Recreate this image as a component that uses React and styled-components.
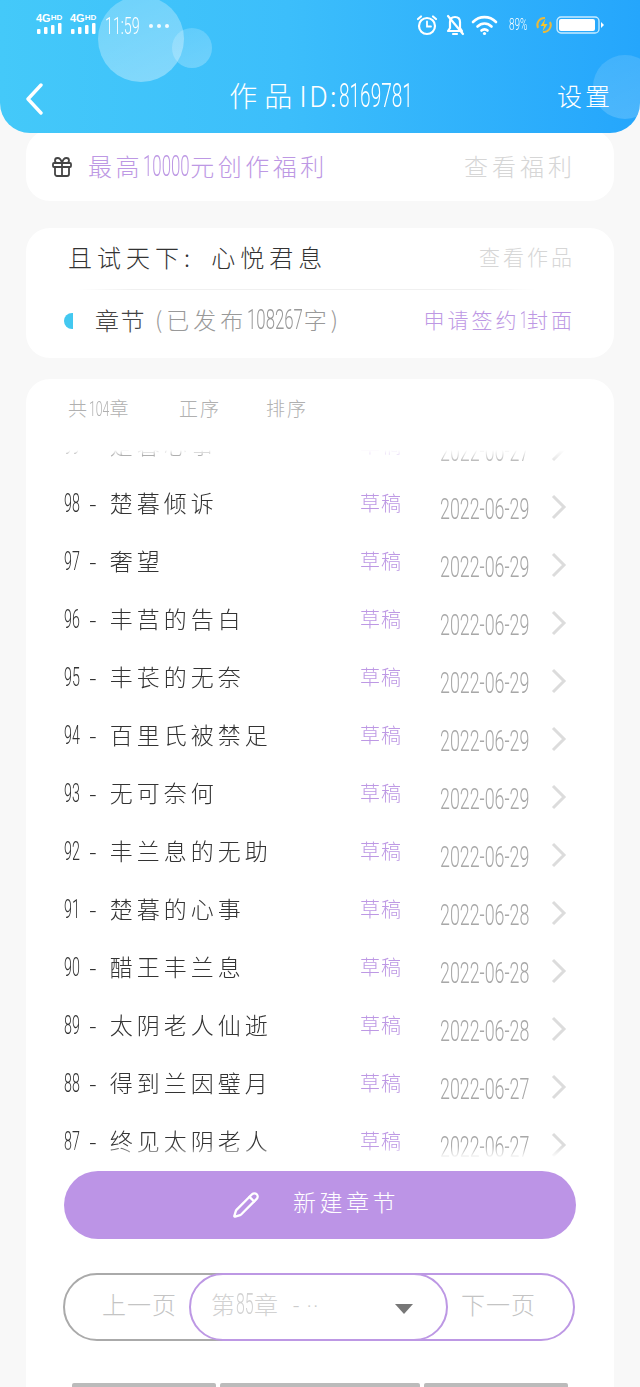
import React from "react";
import styled, { createGlobalStyle } from "styled-components";
import { Gift, Pencil } from "lucide-react";

const Global = createGlobalStyle`
  html, body { margin: 0; padding: 0; background: #f8f8f8; }
  * { box-sizing: border-box; }
  body { font-family: "Noto Sans CJK SC", "Noto Sans", sans-serif; font-weight: 300; }
`;

const Page = styled.div`
  width: 640px; height: 1387px; overflow: hidden; display: flex; flex-direction: column; background: #f8f8f8;
`;
const Header = styled.header`
  position: relative; z-index: 2; height: 133px; flex: none; overflow: hidden;
  border-radius: 0 0 30px 30px; color: #fff;
  background: linear-gradient(90deg, #44c9f9 0%, #3cbefb 45%, #25a6fc 100%);
`;
const Bubble = styled.span`
  position: absolute; border-radius: 50%;
  left: ${p => p.$x - p.$r}px; top: ${p => p.$y - p.$r}px;
  width: ${p => p.$r * 2}px; height: ${p => p.$r * 2}px;
  background: linear-gradient(160deg, rgba(255,255,255,${p => p.$a}) 0%, rgba(255,255,255,${p => p.$a * 1.5}) 100%);
`;
const StatusBar = styled.div`
  position: relative; height: 50px; display: flex; justify-content: space-between; align-items: flex-start; padding: 13px 36px 0 36px;
`;
const StatusLeft = styled.div`display: flex; align-items: flex-start; gap: 7px;`;
const StatusRight = styled.div`display: flex; align-items: center; margin-top: 1px;`;
const StatusItem = styled.div`display: flex; align-items: center; margin-left: ${p => p.$ml}px;`;
const Signal = styled.div`display: flex; flex-direction: column; width: 27px;`;
const SigText = styled.span`
  font: 700 11px/10px "Liberation Sans", sans-serif; white-space: nowrap;
  sup { font-size: 8px; line-height: 7px; vertical-align: 2px; }
`;
const NumBox = styled.span`
  display: inline-block; font-family: Roboto, "Liberation Sans", sans-serif; font-weight: 300; letter-spacing: 0;
  font-size: ${p => p.$s}px; line-height: 1; white-space: nowrap; transform-origin: 0 50%;
  width: ${p => p.$w}px; transform: scaleX(${p => p.$sx});
`;
const emOf = (c) => (/[0-9]/.test(c) ? 0.562 : c === "-" ? 0.28 : c === ":" ? 0.24 : c === "%" ? 0.73 : 0.56);
const Num = ({ s, sx, children }) => {
  const text = String(children);
  const em = [...text].reduce((a, c) => a + emOf(c), 0);
  return <NumBox $s={s} $sx={sx} $w={Math.round(em * s * sx * 10) / 10}>{text}</NumBox>;
};
const ClockSlot = styled.div`margin: 2px 0 0 1px; line-height: 22px;`;
const Dots = styled.div`display: flex; gap: 4px; margin: 11px 0 0 1px;`;
const Dot = styled.i`width: 4px; height: 4px; border-radius: 50%; background: #fff; opacity: .9;`;
const Nav = styled.nav`
  position: relative; height: 83px; display: grid; grid-template-columns: 96px 1fr 100px; align-items: start; padding: 0 27px 0 25px;
`;
const NavTitle = styled.div`
  font-size: 28px; line-height: 40px; margin-top: 25px; letter-spacing: 7px; white-space: nowrap; text-align: center; padding-left: 9px;
`;
const Latin = styled.span`letter-spacing: 2px;`;
const NavAction = styled.div`
  font-size: 25px; line-height: 40px; letter-spacing: 3px; text-align: right; margin-top: 25px; white-space: nowrap;
`;
const BackBtn = styled.div`margin-top: 33px; display: flex; line-height: 0;`;

const Card = styled.section`
  margin: 0 26px; background: #fff; border-radius: 24px; flex: none;
`;
const WelfareCard = styled(Card)`
  margin-top: -3px; height: 71px; display: flex; align-items: center; justify-content: space-between; padding: 0 38px 0 24px;
`;
const Row = styled.div`display: flex; align-items: center;`;
const GiftSlot = styled.div`display: flex; margin-right: 14px; margin-top: 2px;`;
const Purple = styled.span`
  color: #bd98e4; font-size: ${p => p.$s || 24}px; letter-spacing: ${p => p.$l ?? 3.5}px; white-space: nowrap;
`;
const Muted = styled.span`
  color: #d6d6d6; font-size: ${p => p.$s || 24}px; letter-spacing: ${p => p.$l ?? 4}px; white-space: nowrap;
`;
const WorkCard = styled(Card)`
  margin-top: 27px; height: 130px; padding: 0 39px 0 38px; display: flex; flex-direction: column;
`;
const WorkTop = styled.div`
  height: 61px; display: flex; align-items: center; justify-content: space-between; margin: 0 0 0 4px; padding-bottom: 5px;
`;
const WorkDivider = styled.div`
  height: 1px; flex: none; margin: 0 40px 0 14px;
  background: linear-gradient(90deg, transparent, #f0f0f0 12%, #f0f0f0 88%, transparent);
`;
const WorkName = styled.div`font-size: 24px; letter-spacing: 5px; word-spacing: 6px; color: #333; white-space: nowrap;`;
const WorkBottom = styled.div`
  flex: 1; display: flex; align-items: center; justify-content: space-between; padding-bottom: 10px;
`;
const HalfDot = styled.i`
  width: 9px; height: 16px; border-radius: 9px 0 0 9px; background: #43c8f0; margin: 3px 22px 0 0; flex: none;
`;
const ChapterTitle = styled.span`font-size: 24px; letter-spacing: 1.5px; color: #444; white-space: nowrap;`;
const ChapterNote = styled.span`font-size: 23px; letter-spacing: 4px; color: #999; white-space: nowrap; margin-left: 9px;`;

const ListCard = styled(Card)`
  margin-top: 21px; flex: 1; display: flex; flex-direction: column; border-radius: 24px 24px 0 0; padding: 0 38px;
`;
const Filter = styled.div`
  height: 71px; flex: none; display: flex; align-items: flex-start; padding: 15px 0 0 4px; color: #b0b0b0; font-size: 19px; line-height: 28px;
`;
const FilterItem = styled.span`
  width: ${p => p.$w}px; letter-spacing: 2px; white-space: nowrap;
`;
const List = styled.div`
  height: 708px; flex: none; overflow: hidden;
  margin-right: -2px;
  -webkit-mask-image: linear-gradient(180deg, transparent 0, #000 14px, #000 696px, transparent 708px);
  mask-image: linear-gradient(180deg, transparent 0, #000 14px, #000 696px, transparent 708px);
`;
const ListInner = styled.div`margin-top: -33px;`;
const ChapterRow = styled.div`
  height: 58px; display: grid; grid-template-columns: 296px 80px 1fr; align-items: center;
`;
const RowTitle = styled.div`font-size: 23px; letter-spacing: 4px; color: #333; white-space: nowrap; margin-top: -4px;`;
const Draft = styled.div`font-size: 20px; letter-spacing: 1px; color: #bd98e4; margin-top: -4px;`;
const DateCell = styled.div`
  display: flex; align-items: center; justify-content: space-between; color: #a8a8a8; padding: 10px 11px 0 0;
`;
const Chevron = styled.svg`margin-top: -4px;`;
const CreateBtn = styled.button`
  margin: 13px 0 0 0; height: 68px; width: 512px; flex: none; border: 0; border-radius: 34px; background: #bc94e6; color: #fff;
  display: flex; align-items: center; justify-content: center; gap: 33px; font: inherit; font-size: 23px; letter-spacing: 3.5px; padding: 0 9px 8px 0;
  svg { margin-top: 8px; }
`;
const Pager = styled.div`
  margin: 34px 0 0 -1px; width: 512px; height: 68px; flex: none; display: flex;
`;
const PageEdge = styled.div`
  flex: none; height: 68px; border: 2px solid ${p => p.$c}; border-radius: 34px; color: #c4c4c4; font-size: 24px; letter-spacing: 1px; background: #fff;
  display: flex; align-items: center; white-space: nowrap; padding-bottom: 7px;
`;
const PrevBtn = styled(PageEdge)`width: 196px; padding-left: 37px; margin-right: -70px;`;
const NextBtn = styled(PageEdge)`width: 195px; padding-left: 79px; margin-left: -68px;`;
const PageSelect = styled(PageEdge)`
  position: relative; z-index: 1; width: 259px; padding: 0 33px 7px 20px; justify-content: space-between; color: #d2d2d2;
`;
const Ellipsis = styled.span`margin-left: 14px; letter-spacing: 1px; color: #ccc; font-family: Roboto, sans-serif; font-size: 22px;`;
const Caret = styled.i`
  width: 0; height: 0; border: 9px solid transparent; border-top: 10px solid #777; border-bottom: 0; margin-top: 11px;
`;
const Tabs = styled.div`
  margin: 42px 0 0 8px; display: flex; gap: 4px; flex: none; width: 496px;
`;
const TabBar = styled.div`width: ${p => p.$w}px; height: 12px; background: #bbb; border-radius: 2px 2px 0 0;`;

const chapters = [
  ["99", "楚暮心事", "2022-06-27"],
  ["98", "楚暮倾诉", "2022-06-29"],
  ["97", "奢望", "2022-06-29"],
  ["96", "丰莒的告白", "2022-06-29"],
  ["95", "丰苌的无奈", "2022-06-29"],
  ["94", "百里氏被禁足", "2022-06-29"],
  ["93", "无可奈何", "2022-06-29"],
  ["92", "丰兰息的无助", "2022-06-29"],
  ["91", "楚暮的心事", "2022-06-28"],
  ["90", "醋王丰兰息", "2022-06-28"],
  ["89", "太阴老人仙逝", "2022-06-28"],
  ["88", "得到兰因璧月", "2022-06-27"],
  ["87", "终见太阴老人", "2022-06-27"],
];

const Alarm = () => (
  <svg width="24" height="22" viewBox="0 0 24 22" fill="none" stroke="#fff" strokeWidth="2.2" strokeLinecap="round">
    <circle cx="12" cy="12" r="8" />
    <path d="M12 7.5V12.5H16" strokeWidth="1.8" />
    <path d="M3 5L6 2.5M21 5L18 2.5" />
  </svg>
);
const BellOff = () => (
  <svg width="20" height="22" viewBox="0 0 20 22" fill="none" stroke="#fff" strokeWidth="2.2" strokeLinecap="round" strokeLinejoin="round">
    <path d="M5 8C5 5 7 3 10 3S15 5 15 8V14L17 17H3L5 14Z" />
    <path d="M8 20H12" />
    <path d="M3 2L18 20" />
  </svg>
);
const Wifi = () => (
  <svg width="27" height="22" viewBox="0 0 27 22" fill="none" stroke="#fff" strokeWidth="2.6" strokeLinecap="round">
    <path d="M2 8C8.5 1.5 18.5 1.5 25 8" />
    <path d="M6.5 12.5C10.5 8.5 16.5 8.5 20.5 12.5" />
    <path d="M10.5 16.5C12 15 15 15 16.5 16.5" />
    <circle cx="13.5" cy="19.5" r="1.6" fill="#fff" stroke="none" />
  </svg>
);
const Charge = () => (
  <svg width="18" height="20" viewBox="0 0 18 20" fill="none">
    <path d="M3 13A7 7 0 0 1 10 3M15 7A7 7 0 0 1 8 17" stroke="#e9b93c" strokeWidth="2" />
    <path d="M10.5 3.5L5.5 11H9L7.5 16.5L12.5 9H9Z" fill="#f5c52b" />
  </svg>
);
const Battery = () => (
  <svg width="48" height="18" viewBox="0 0 48 18" fill="none">
    <rect x="1" y="1" width="42" height="16" rx="4" stroke="#c8ecff" strokeWidth="1.3" />
    <rect x="3" y="3" width="36" height="12" rx="2" fill="#fff" />
    <path d="M45 6L48 9L45 12Z" fill="#fff" />
  </svg>
);
const Bars = () => (
  <svg width="26" height="11" viewBox="0 0 26 11" fill="#fff">
    <rect x="1" y="6" width="3.5" height="5" rx="1" />
    <rect x="8" y="4" width="3.5" height="7" rx="1" />
    <rect x="15" y="2" width="3.5" height="9" rx="1" />
    <rect x="22" y="0" width="3.5" height="11" rx="1" />
  </svg>
);
const Back = () => (
  <svg width="18" height="32" viewBox="0 0 18 32" fill="none" stroke="#fff" strokeWidth="3.4" strokeLinecap="round" strokeLinejoin="round">
    <path d="M16 2L3 16L16 30" />
  </svg>
);
const RowChevron = () => (
  <Chevron width="16" height="26" viewBox="0 0 16 26" fill="none" stroke="#dcdcdc" strokeWidth="3">
    <path d="M2 2L13 13L2 24" />
  </Chevron>
);

export default function App() {
  return (
    <Page>
      <Global />
      <Header>
        <Bubble $x={141} $y={39} $r={43} $a={0.24} />
        <Bubble $x={192} $y={48} $r={20} $a={0.17} />
        <Bubble $x={625} $y={87} $r={32} $a={0.12} />
        <StatusBar>
          <StatusLeft>
            <Signal><SigText>4G<sup>HD</sup></SigText><Bars /></Signal>
            <Signal><SigText>4G<sup>HD</sup></SigText><Bars /></Signal>
            <ClockSlot><Num s={23} sx={0.62}>11:59</Num></ClockSlot>
            <Dots><Dot /><Dot /><Dot /></Dots>
          </StatusLeft>
          <StatusRight>
            <StatusItem $ml={0}><Alarm /></StatusItem>
            <StatusItem $ml={6}><BellOff /></StatusItem>
            <StatusItem $ml={6}><Wifi /></StatusItem>
            <StatusItem $ml={11}><Num s={16} sx={0.62}>89%</Num></StatusItem>
            <StatusItem $ml={8}><Charge /></StatusItem>
            <StatusItem $ml={3}><Battery /></StatusItem>
          </StatusRight>
        </StatusBar>
        <Nav>
          <BackBtn><Back /></BackBtn>
          <NavTitle>作品<Latin>ID:</Latin><Num s={34} sx={0.56}>8169781</Num></NavTitle>
          <NavAction>设置</NavAction>
        </Nav>
      </Header>

      <WelfareCard>
        <Row>
          <GiftSlot><Gift size={24} strokeWidth={1.8} color="#444" /></GiftSlot>
          <Purple>最高<Num s={29} sx={0.58}>10000</Num>元创作福利</Purple>
        </Row>
        <Muted $s={24}>查看福利</Muted>
      </WelfareCard>

      <WorkCard>
        <WorkTop>
          <WorkName>且试天下: 心悦君息</WorkName>
          <Muted $s={21} $l={3}>查看作品</Muted>
        </WorkTop>
        <WorkDivider />
        <WorkBottom>
          <Row>
            <HalfDot />
            <ChapterTitle>章节</ChapterTitle>
            <ChapterNote>(已发布<Num s={28} sx={0.6}>108267</Num>字)</ChapterNote>
          </Row>
          <Purple $s={21} $l={3}>申请签约<Num s={24} sx={0.55}>1</Num>封面</Purple>
        </WorkBottom>
      </WorkCard>

      <ListCard>
        <Filter>
          <FilterItem $w={111}>共<Num s={21} sx={0.58}>104</Num>章</FilterItem>
          <FilterItem $w={87}>正序</FilterItem>
          <FilterItem $w={60}>排序</FilterItem>
        </Filter>
        <List>
          <ListInner>
            {chapters.map(([num, title, date]) => (
              <ChapterRow key={num}>
                <RowTitle><Num s={25} sx={0.57}>{num}</Num> - {title}</RowTitle>
                <Draft>草稿</Draft>
                <DateCell>
                  <Num s={29} sx={0.615}>{date}</Num>
                  <RowChevron />
                </DateCell>
              </ChapterRow>
            ))}
          </ListInner>
        </List>
        <CreateBtn>
          <Pencil size={28} strokeWidth={2} />
          <span>新建章节</span>
        </CreateBtn>
        <Pager>
          <PrevBtn $c="#aaa">上一页</PrevBtn>
          <PageSelect $c="#bd98e4"><span>第<Num s={29} sx={0.55}>85</Num>章<Ellipsis>- ··</Ellipsis></span><Caret /></PageSelect>
          <NextBtn $c="#bd98e4">下一页</NextBtn>
        </Pager>
        <Tabs>
          <TabBar $w={144} />
          <TabBar $w={200} />
          <TabBar $w={144} />
        </Tabs>
      </ListCard>
    </Page>
  );
}
